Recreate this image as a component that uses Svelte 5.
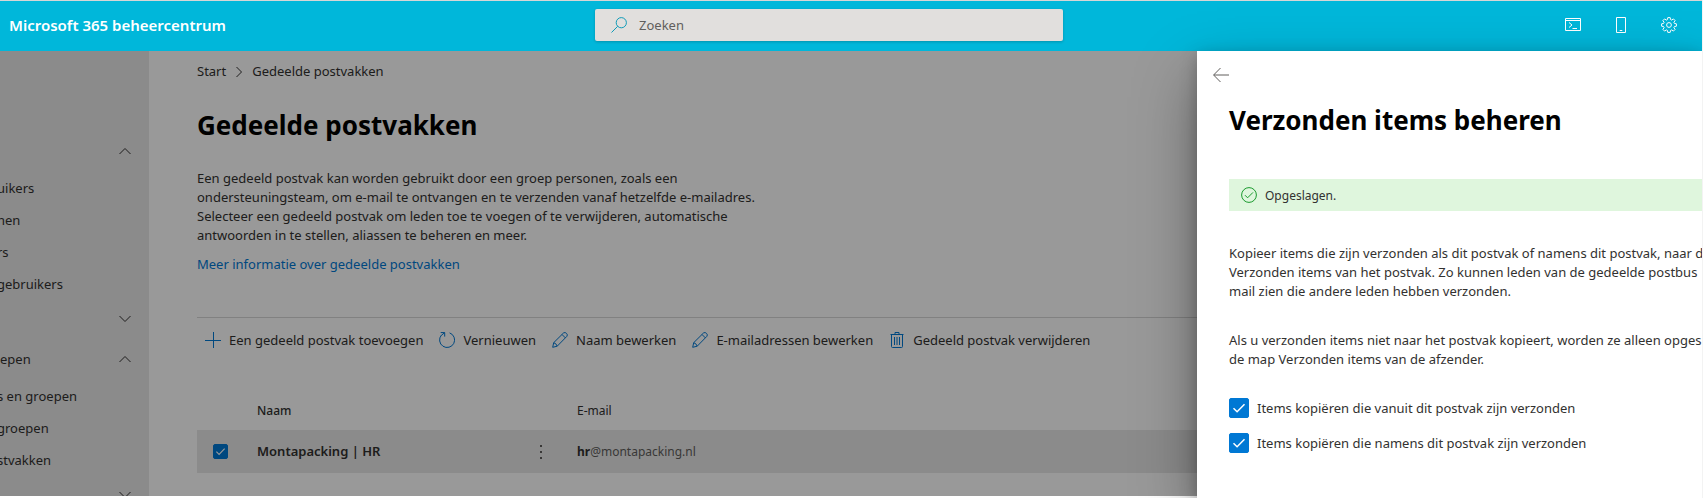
<script>
  const navGroups = [
    { label: '', open: true, items: ['uikers', 'nen', 'rs', 'gebruikers'] },
    { label: '', open: false, items: [] },
    { label: 'epen', open: true, items: ['s en groepen', 'groepen', 'stvakken'] },
    { label: '', open: false, items: [] }
  ];

  const commands = [
    { icon: 'add', label: 'Een gedeeld postvak toevoegen' },
    { icon: 'refresh', label: 'Vernieuwen' },
    { icon: 'edit', label: 'Naam bewerken' },
    { icon: 'edit', label: 'E-mailadressen bewerken' },
    { icon: 'trash', label: 'Gedeeld postvak verwijderen' }
  ];

  let rowSelected = $state(true);
  let copySentAs = $state(true);
  let copySentOnBehalf = $state(true);
</script>

{#snippet icon(name)}
  <svg class="icon" viewBox="0 0 16 16" width="16" height="16" fill="none" stroke="currentColor" aria-hidden="true">
    {#if name === 'add'}
      <path d="M8.5 0v16M0 8.5h16" />
    {:else if name === 'refresh'}
      <path d="M10.6 .9a7.5 7.5 0 1 1-8.2 2.2M1.7.6h4v4M5.5.8L2.4 3.3" />
    {:else if name === 'edit'}
      <path d="M.7 15.3l1-4.6L11.6.9q1.6-1 2.9.5 1.5 1.4.4 2.9L5.2 14.2zM1.7 10.7q2.6.6 3.5 3.5M10 2.5l3.4 3.4" />
    {:else if name === 'trash'}
      <path d="M1.5 2.5h13M6 2.5v-2h4v2M2.5 2.5v12q0 1 1 1h9q1 0 1-1v-12M5.5 5v8M8 5v8M10.5 5v8" />
    {:else if name === 'search'}
      <circle cx="10.3" cy="5.7" r="5.1" />
      <path d="M6.7 9.3L.5 15.5" />
    {:else if name === 'shell'}
      <path d="M.5 1.5h15v12H.5zM.5 3.5h15M4 5.500l3 2.500-3 2.500M7.500 11.500h4.500" />
    {:else if name === 'phone'}
      <path d="M3.5.5h9v15h-9zM6.700 13.500h2.600" />
    {:else if name === 'gear'}
      <circle cx="8" cy="8" r="2.4" />
      <path d="M6.8.6h2.4l.4 2 1.1.5 1.7-1.2 1.7 1.7-1.2 1.7.5 1.1 2 .4v2.4l-2 .4-.5 1.1 1.2 1.7-1.7 1.7-1.7-1.2-1.1.5-.4 2H6.8l-.4-2-1.1-.5-1.7 1.2-1.7-1.7 1.2-1.7-.5-1.1-2-.4V6.8l2-.4.5-1.1-1.2-1.7 1.7-1.7 1.7 1.2 1.1-.5z" />
    {:else if name === 'back'}
      <path d="M16 8H.8M7.5 1L.6 8l6.9 7" />
    {:else if name === 'done'}
      <circle cx="8" cy="8" r="7.4" />
      <path d="M4 8.200l2.600 2.600 5.400-5.400" />
    {:else if name === 'up'}
      <path d="M2.500 11L8 5.500l5.500 5.500" />
    {:else if name === 'down'}
      <path d="M2.500 5L8 10.500 13.500 5" />
    {:else if name === 'right'}
      <path d="M5.500 3l5 5-5 5" />
    {:else if name === 'more'}
      <path d="M7 1h2v2H7zM7 7h2v2H7zM7 13h2v2H7z" fill="currentColor" stroke="none" />
    {/if}
  </svg>
{/snippet}

{#snippet tick()}
  <svg class="tick" viewBox="0 0 20 20" fill="none" stroke="#fff" stroke-width="1.500" aria-hidden="true">
    <path d="M4.500 10.200l3.600 3.600 7.400-7.600" />
  </svg>
{/snippet}

<div class="page">
  <header class="topbar">
    <span class="brand">Microsoft 365 beheercentrum</span>
    <label class="search">
      {@render icon('search')}
      <input type="search" placeholder="Zoeken" aria-label="Zoeken" />
    </label>
    <div class="tools">
      <button type="button" aria-label="Shell">{@render icon('shell')}</button>
      <button type="button" aria-label="Mobiel">{@render icon('phone')}</button>
      <button type="button" aria-label="Instellingen">{@render icon('gear')}</button>
    </div>
  </header>

  <div class="body">
    <nav class="sidebar">
      {#each navGroups as group}
        <div class="section">
          <button type="button" class="group" aria-expanded={group.open} aria-label={group.label || 'Groep'}>
            <span>{group.label}</span>
            {@render icon(group.open ? 'up' : 'down')}
          </button>
          {#each group.items as item}
            <a class="nav-item" href="#top">{item}</a>
          {/each}
        </div>
      {/each}
    </nav>

    <main class="content">
      <div class="crumbs">
        <a href="#top">Start</a>
        {@render icon('right')}
        <span>Gedeelde postvakken</span>
      </div>
      <h1>Gedeelde postvakken</h1>
      <p class="intro">
        Een gedeeld postvak kan worden gebruikt door een groep personen, zoals een<br />
        ondersteuningsteam, om e-mail te ontvangen en te verzenden vanaf hetzelfde e-mailadres.<br />
        Selecteer een gedeeld postvak om leden toe te voegen of te verwijderen, automatische<br />
        antwoorden in te stellen, aliassen te beheren en meer.
      </p>
      <a class="more-info" href="#top">Meer informatie over gedeelde postvakken</a>

      <div class="commands">
        {#each commands as command}
          <button type="button">{@render icon(command.icon)}{command.label}</button>
        {/each}
      </div>

      <table>
        <thead>
          <tr>
            <th class="pick"></th>
            <th class="name strong">Naam</th>
            <th>E-mail</th>
          </tr>
        </thead>
        <tbody>
          <tr>
            <td class="pick">
              <label class="check small">
                <input type="checkbox" bind:checked={rowSelected} aria-label="Montapacking | HR" />
                {@render tick()}
              </label>
            </td>
            <td class="name">
              <div class="name-cell">
                <span>Montapacking | HR</span>
                <button type="button" aria-label="Meer acties">{@render icon('more')}</button>
              </div>
            </td>
            <td class="mail"><b>hr</b>@montapacking.nl</td>
          </tr>
        </tbody>
      </table>
    </main>
    <div class="dim"></div>
  </div>

  <aside class="panel">
    <button type="button" class="back" aria-label="Terug">{@render icon('back')}</button>
    <div class="panel-body">
      <h2>Verzonden items beheren</h2>
      <div class="notice" role="status">{@render icon('done')}<span>Opgeslagen.</span></div>
      <p>
        Kopieer items die zijn verzonden als dit postvak of namens dit postvak, naar d<br />
        Verzonden items van het postvak. Zo kunnen leden van de gedeelde postbus<br />
        mail zien die andere leden hebben verzonden.
      </p>
      <p>
        Als u verzonden items niet naar het postvak kopieert, worden ze alleen opges<br />
        de map Verzonden items van de afzender.
      </p>
      <div class="options">
        <label class="check">
          <input type="checkbox" bind:checked={copySentAs} />
          {@render tick()}
          <span>Items kopiëren die vanuit dit postvak zijn verzonden</span>
        </label>
        <label class="check">
          <input type="checkbox" bind:checked={copySentOnBehalf} />
          {@render tick()}
          <span>Items kopiëren die namens dit postvak zijn verzonden</span>
        </label>
      </div>
    </div>
  </aside>
</div>

<style>
  :global(body) {
    margin: 0;
    background: #f3f3f3;
  }

  .page {
    box-sizing: border-box;
    position: relative;
    height: 100vh;
    margin-right: 1px;
    padding-bottom: 2px;
    border-top: 1px solid #d6d6d6;
    display: flex;
    flex-direction: column;
    overflow: hidden;
    background: #fff;
    color: #323130;
    font: 13px/19px 'Noto Sans', 'Open Sans', sans-serif;
  }

  button {
    font: inherit;
    color: inherit;
    background: none;
    border: 0;
    padding: 0;
  }

  a {
    color: inherit;
    text-decoration: none;
  }

  .icon {
    flex: none;
    display: block;
  }

  .topbar {
    flex: none;
    box-sizing: border-box;
    height: 50px;
    padding-bottom: 2px;
    display: grid;
    grid-template-columns: 595fr 468fr 639fr;
    align-items: center;
    background: #00b7da;
  }

  .brand {
    padding-left: 9px;
    color: #fff;
    font-size: 15px;
    font-weight: 600;
  }

  .search {
    box-sizing: border-box;
    height: 32px;
    display: flex;
    align-items: center;
    gap: 12px;
    padding-left: 16px;
    border-radius: 2px;
    background: #e1dfdd;
    box-shadow: 0 1px 3px rgba(0, 0, 0, 0.2);
    color: #0f9bb8;
  }

  .search input {
    flex: 1;
    min-width: 0;
    padding: 0;
    border: 0;
    outline: 0;
    background: none;
    font: inherit;
    color: #323130;
  }

  .search input::placeholder {
    color: #605e5c;
  }

  .tools {
    display: flex;
    justify-content: flex-end;
    padding-right: 9px;
    color: #fff;
  }

  .tools button {
    width: 48px;
    height: 48px;
    display: grid;
    place-items: center;
  }

  .body {
    position: relative;
    flex: 1;
    min-height: 0;
    display: flex;
    overflow: hidden;
  }

  .dim {
    position: absolute;
    inset: 0;
    background: rgba(0, 0, 0, 0.4);
  }

  .sidebar {
    flex: none;
    box-sizing: border-box;
    width: 149px;
    padding-top: 80px;
    background: #e8e8e8;
    overflow: hidden;
    white-space: nowrap;
  }

  .group {
    width: 100%;
    height: 40px;
    display: flex;
    align-items: center;
    justify-content: space-between;
    padding-right: 16px;
  }

  .nav-item {
    display: block;
    height: 32px;
    line-height: 34px;
    margin-left: -3px;
  }

  .content {
    flex: 1;
    min-width: 0;
    padding: 11px 0 0 48px;
    white-space: nowrap;
  }

  .crumbs {
    display: flex;
    align-items: center;
    gap: 5px;
  }

  h1,
  h2 {
    margin: 0;
    font-size: 26px;
    line-height: 36px;
    font-weight: 700;
    color: #000;
  }

  h1 {
    margin-top: 26px;
  }

  .intro {
    margin: 26px 0 10px;
  }

  .more-info {
    display: block;
    color: #0078d4;
  }

  .commands {
    display: flex;
    height: 44px;
    margin-top: 43px;
    border-top: 1px solid #d8d8d8;
  }

  .commands button {
    display: flex;
    align-items: center;
    gap: 8px;
    padding: 0 8px;
  }

  .commands .icon {
    color: #0078d4;
  }

  table {
    width: 100%;
    margin-top: 28px;
    table-layout: fixed;
    border-collapse: collapse;
    font-size: 12px;
  }

  th,
  td {
    padding: 0;
    text-align: left;
    font-weight: 400;
  }

  th {
    height: 40px;
  }

  .strong {
    font-weight: 500;
  }

  td {
    height: 43px;
    background: #e8e8e8;
  }

  .pick {
    width: 60px;
  }

  .name {
    width: 320px;
  }

  .mail {
    color: #605e5c;
  }

  .mail b {
    color: #323130;
  }

  .name-cell {
    display: flex;
    align-items: center;
    justify-content: space-between;
    padding-right: 28px;
    font-size: 13px;
    font-weight: 600;
  }

  .name-cell button {
    color: #605e5c;
  }

  .check {
    position: relative;
    display: flex;
    align-items: center;
    gap: 8px;
  }

  .check input {
    appearance: none;
    flex: none;
    width: 20px;
    height: 20px;
    margin: 0;
    border: 1px solid #323130;
    border-radius: 2px;
  }

  .check input:checked {
    border-color: #0078d4;
    background: #0078d4;
  }

  .tick {
    position: absolute;
    left: 0;
    width: 20px;
    height: 20px;
    pointer-events: none;
  }

  .small {
    padding-left: 16px;
  }

  .small input,
  .small .tick {
    width: 15px;
    height: 15px;
  }

  .small .tick {
    left: 16px;
  }

  .panel {
    position: absolute;
    top: 50px;
    right: 0;
    bottom: 0;
    width: 505px;
    box-sizing: border-box;
    padding: 16px 0 0;
    background: #fff;
    box-shadow:
      0 26px 58px rgba(0, 0, 0, 0.36),
      0 5px 16px rgba(0, 0, 0, 0.26);
    white-space: nowrap;
  }

  .back {
    display: block;
    margin-left: 16px;
    color: #605e5c;
  }

  .panel-body {
    padding-left: 32px;
    overflow: hidden;
  }

  h2 {
    margin-top: 19px;
  }

  .notice {
    height: 32px;
    display: flex;
    align-items: center;
    gap: 8px;
    margin: 41px 0 33px;
    padding-left: 12px;
    background: #dff6dd;
    font-size: 12px;
  }

  .notice .icon {
    color: #1a9a2e;
  }

  .panel p {
    margin: 0;
  }

  .panel p + p {
    margin-top: 30px;
  }

  .options {
    display: grid;
    gap: 15px;
    margin-top: 29px;
  }
</style>
